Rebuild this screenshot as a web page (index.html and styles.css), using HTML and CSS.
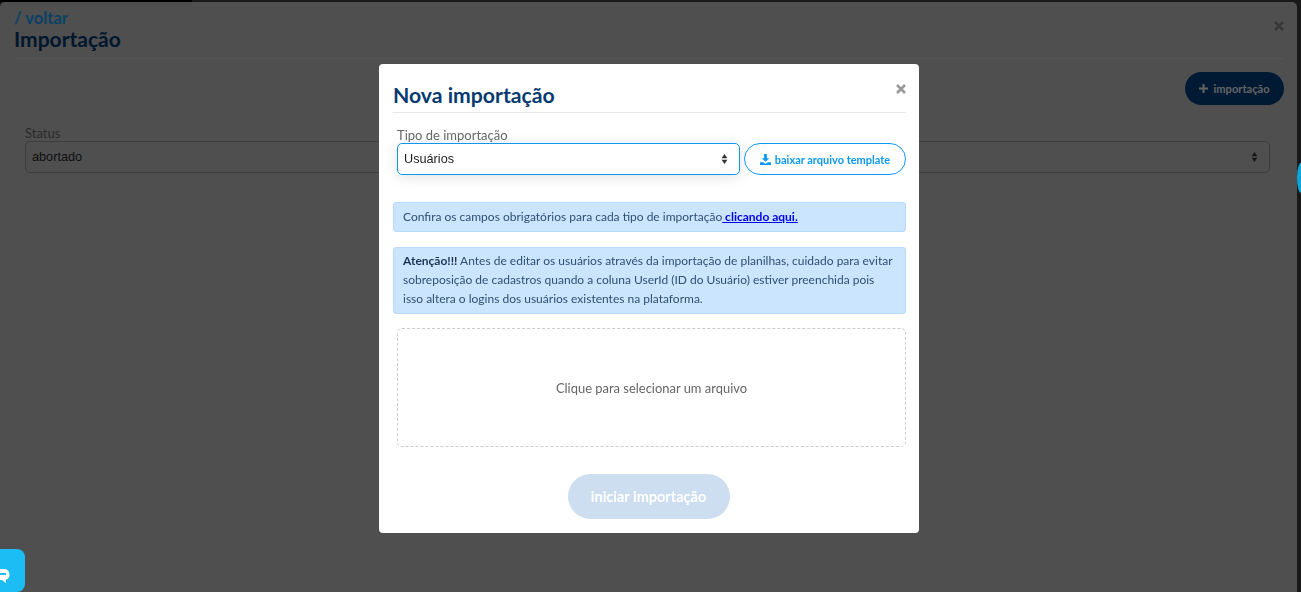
FILE: index.html
```html
<!DOCTYPE html>
<html lang="pt-BR">
<head>
    <meta charset="UTF-8"/>
    <meta name="viewport" content="width=device-width, initial-scale=1.0"/>
    <title>Importação</title>
    <link rel="stylesheet" href="styles.css">
</head>

<body>
<div class="top-bar"></div>
<div class="page">
    <header class="page-head">
        <div>
            <a class="back" href="#">/ voltar</a>
            <h1>Importação</h1>
        </div>
        <svg class="close-icon page-close" width="10" height="10" viewBox="0 0 10 10"><path d="M1 1l8 8M9 1l-8 8"/></svg>
    </header>
    <div class="actions">
        <button class="add-btn">
            <svg width="9" height="9" viewBox="0 0 9 9"><path d="M4.500 0v9M0 4.500h9"/></svg>
            importação
        </button>
    </div>
    <div class="filter">
        <label>Status</label>
        <div class="fake-select">
            <span>abortado</span>
            <svg class="arrows" width="7" height="10" viewBox="0 0 8 12"><path d="M4 0 7.500 5H.5zM4 12 .5 7h7z"/></svg>
        </div>
    </div>
</div>

<!-- botões flutuantes do chat -->
<div class="chat-tab"></div>
<div class="chat-btn">
    <svg width="10" height="14" viewBox="0 0 10 14"><path d="M0 0h4a5.500 5.500 0 0 1 2 10.600V14L2 11H0z" fill="#fff"/><path d="M0 5h6" stroke="#1cbcf4" stroke-width="2"/></svg>
</div>

<div class="overlay">
    <div class="modal">
        <div class="modal-head">
            <h2>Nova importação</h2>
            <svg class="close-icon modal-close" width="10" height="10" viewBox="0 0 10 10"><path d="M1 1l8 8M9 1l-8 8"/></svg>
        </div>
        <div class="type-row">
            <div class="type-field">
                <label>Tipo de importação</label>
                <div class="fake-select focus">
                    <span>Usuários</span>
                    <svg class="arrows" width="7" height="10" viewBox="0 0 8 12"><path d="M4 0 7.500 5H.5zM4 12 .5 7h7z"/></svg>
                </div>
            </div>
            <button class="template-btn">
                <svg width="11" height="11" viewBox="0 0 12 12"><path d="M4.500 0h3v4.500H10L6 8.500 2 4.500h2.500zM0 9h3.500L6 10.500 8.500 9H12v3H0z" fill="#0d99f2"/></svg>
                baixar arquivo template
            </button>
        </div>
        <div class="notice first">Confira os campos obrigatórios para cada tipo de importação<a href="#"> clicando aqui.</a></div>
        <div class="notice"><b>Atenção!!!</b> Antes de editar os usuários através da importação de planilhas, cuidado para evitar sobreposição de cadastros quando a coluna UserId (ID do Usuário) estiver preenchida pois isso altera o logins dos usuários existentes na plataforma.</div>
        <div class="dropzone">Clique para selecionar um arquivo</div>
        <div class="modal-foot">
            <button class="start-btn">iniciar importação</button>
        </div>
    </div>
</div>
</body>
</html>
```

FILE: styles.css
```css
* {
    box-sizing: border-box;
}

html,
body {
    height: 100%;
}

body {
    margin: 0;
    overflow: hidden;
    background: #333;
    font-family: Lato, "Noto Sans", sans-serif;
    color: #333;
}

button {
    font-family: inherit;
    border: none;
}

.top-bar {
    width: 192px;
    height: 2px;
    background: #000;
}

/* pagina atras do modal */
.page {
    height: calc(100% - 2px);
    margin-right: 4px;
    padding: 7px 13px 0 14px;
    background: #9e9e9e;
    border-radius: 5px 5px 0 0;
}

.page-head {
    display: flex;
    justify-content: space-between;
    align-items: flex-start;
    height: 50px;
    border-bottom: 1px solid #aaa;
}

.back {
    display: block;
    font-size: 16.500px;
    line-height: 18px;
    font-weight: 700;
    color: #1484cc;
    text-decoration: none;
}

h1 {
    margin: 0;
    font-size: 21px;
    line-height: 24px;
    font-weight: 700;
    color: #002f5c;
}

.close-icon {
    fill: none;
    stroke-width: 2.600;
}

.page-close {
    margin-top: 12px;
    stroke: #707070;
}

.actions {
    display: flex;
    justify-content: flex-end;
    padding-top: 13px;
}

.add-btn {
    display: flex;
    align-items: center;
    justify-content: center;
    gap: 5px;
    width: 99px;
    height: 33px;
    padding: 0;
    border-radius: 17px;
    background: #003468;
    color: #c8c8c8;
    font-size: 11.100px;
    font-weight: 700;
}

.add-btn svg {
    stroke: #c8c8c8;
    stroke-width: 2;
}

.filter {
    padding: 21px 14px 0 11px;
}

.filter label,
.type-field label {
    display: block;
    font-size: 13px;
    line-height: 15px;
    color: #666;
}

.filter label {
    color: #555;
}

.fake-select {
    display: flex;
    justify-content: space-between;
    align-items: center;
    height: 32px;
    padding: 0 11px 0 6px;
    border: 1px solid #7a7a7a;
    border-radius: 5px;
    font-family: "Liberation Sans", Arial, sans-serif;
    font-size: 12.700px;
    color: #222;
}

.fake-select.focus {
    border-color: #0d99f2;
    background: #fff;
    box-shadow: 0 2px 14px rgba(0, 0, 0, .12);
}

.arrows {
    fill: #333;
}

.chat-tab {
    position: fixed;
    top: 163px;
    right: -4px;
    width: 8px;
    height: 30px;
    border-radius: 50%;
    background: #0ea5d8;
    z-index: 1;
}

.chat-btn {
    position: fixed;
    left: 0;
    bottom: 0;
    width: 25px;
    height: 43px;
    overflow: hidden;
    border-radius: 0 8px 8px 0;
    background: #1cbcf4;
    padding-top: 20px;
    z-index: 1;
}

.chat-btn svg {
    display: block;
}

.overlay {
    position: fixed;
    top: 0;
    left: 0;
    width: 100%;
    height: 100%;
    padding: 64px 3px 0 0;
    display: flex;
    justify-content: center;
    align-items: flex-start;
    background: rgba(0, 0, 0, .5);
}

.modal {
    width: 540px;
    height: 469px;
    padding: 0 13px 0 14px;
    background: #fff;
    border-radius: 4px;
}

.modal-head {
    display: flex;
    justify-content: space-between;
    align-items: flex-start;
    height: 49px;
    padding-top: 16px;
    border-bottom: 1px solid #e8e8e8;
}

h2 {
    margin: 0;
    font-size: 21.200px;
    line-height: 30px;
    font-weight: 700;
    color: #063a70;
}

.modal-close {
    margin-top: 4px;
    stroke: #999;
}

.type-row {
    display: flex;
    align-items: flex-end;
    gap: 4px;
    padding: 15px 0 0 4px;
}

.type-field {
    flex: 1;
}

.template-btn {
    display: flex;
    align-items: center;
    justify-content: center;
    gap: 4px;
    width: 162px;
    height: 32px;
    padding: 0;
    border: 1px solid #0d99f2;
    border-radius: 16px;
    background: #fff;
    color: #0d99f2;
    font-size: 11px;
    font-weight: 700;
}

.notice {
    margin-top: 15px;
    padding: 3px 9px 5px;
    border: 1px solid #b8daff;
    border-radius: 3px;
    background: #cce5ff;
    font-size: 12px;
    line-height: 19px;
    color: #2f4f73;
}

.notice b {
    color: #1a3554;
}

.notice.first {
    margin-top: 27px;
    padding: 4px 9px 5px;
}

.notice a {
    color: #0000ee;
    font-weight: 700;
    text-decoration: underline;
}

.dropzone {
    display: flex;
    justify-content: center;
    align-items: center;
    height: 119px;
    margin: 14px 0 0 4px;
    border: 1px dashed #ccc;
    border-radius: 5px;
    font-size: 12.950px;
    color: #666;
}

.modal-foot {
    display: flex;
    justify-content: center;
    padding: 27px 2px 0 0;
}

.start-btn {
    width: 162px;
    height: 45px;
    border-radius: 23px;
    background: #cddef0;
    color: #fff;
    font-size: 14.500px;
    font-weight: 700;
}
```
